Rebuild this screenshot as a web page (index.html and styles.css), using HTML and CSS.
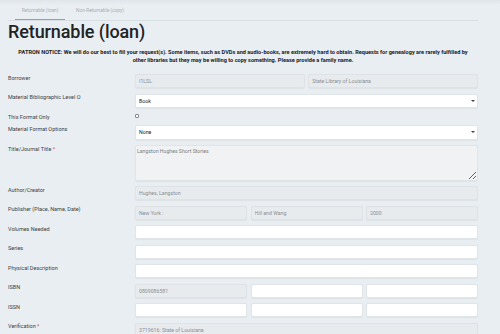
FILE: index.html
```html
<!DOCTYPE html>
<html lang="en">
<head>
  <meta charset="UTF-8" />
  <meta name="viewport" content="width=device-width, initial-scale=1.0" />
  <title>Returnable (loan)</title>
  <link rel="stylesheet" href="styles.css">
</head>
<body>
  <div class="tabs">
    <a class="tab active">Returnable (loan)</a>
    <a class="tab">Non-Returnable (copy)</a>
  </div>
  <h1>Returnable (loan)</h1>
  <p class="notice">PATRON NOTICE: We will do our best to fill your request(s). Some items, such as DVDs and audio-books, are extremely hard to obtain. Requests for genealogy are rarely fulfilled by other libraries but they may be willing to copy something. Please provide a family name.</p>

  <form class="form">
    <div class="row">
      <label>Borrower</label>
      <div class="fields two">
        <input class="ro" value="I1LSL" readonly>
        <input class="ro" value="State Library of Louisiana" readonly>
      </div>
    </div>
    <div class="row">
      <label>Material Bibliographic Level O</label>
      <div class="select-wrap">
        <select><option>Book</option></select>
      </div>
    </div>
    <div class="row check-row">
      <label>This Format Only</label>
      <div><input type="checkbox" class="check"></div>
    </div>
    <div class="row">
      <label>Material Format Options</label>
      <div class="select-wrap">
        <select><option>None</option></select>
      </div>
    </div>
    <div class="row">
      <label>Title/Journal Title <span class="req">*</span></label>
      <textarea class="ro" readonly>Langston Hughes Short Stories</textarea>
    </div>
    <div class="row">
      <label>Author/Creator</label>
      <input class="ro" value="Hughes, Langston" readonly>
    </div>
    <div class="row">
      <label>Publisher (Place, Name, Date)</label>
      <div class="fields three">
        <input class="ro" value="New York :" readonly>
        <input class="ro" value="Hill and Wang" readonly>
        <input class="ro" value="2000" readonly>
      </div>
    </div>
    <div class="row">
      <label>Volumes Needed</label>
      <input>
    </div>
    <div class="row">
      <label>Series</label>
      <input>
    </div>
    <div class="row">
      <label>Physical Description</label>
      <input>
    </div>
    <div class="row">
      <label>ISBN</label>
      <div class="fields three">
        <input class="ro" value="0809086581" readonly>
        <input>
        <input>
      </div>
    </div>
    <div class="row">
      <label>ISSN</label>
      <div class="fields three">
        <input>
        <input>
        <input>
      </div>
    </div>
    <div class="row">
      <label>Verification <span class="req">*</span></label>
      <input class="ro" value="3719616: State of Louisiana" readonly>
    </div>
  </form>
</body>
</html>
```

FILE: styles.css
```css
/* Base */
* { margin: 0; padding: 0; box-sizing: border-box; }
body { font-family: Roboto, "Liberation Sans", sans-serif; font-size: 5.5px; background: #e8eef1 linear-gradient(#dfe5e9, #e8eef1 5px) no-repeat; color: #333; padding: 0 22px 0 8px; overflow: hidden; }

/* Tabs */
.tabs { display: flex; height: 21px; border-bottom: 1px solid #d9e0e4; }
.tab { width: 50px; padding-top: 8px; text-align: center; font-size: 4.8px; color: #a9b0b5; margin-left: 7px; }
.tab.active { border-bottom: 1.5px solid #9aa1a6; }
.tab + .tab { width: 70px; margin-left: 0; }

/* Heading & notice */
h1 { font-size: 18px; font-weight: 500; color: #1f2326; line-height: 22px; letter-spacing: -0.1px; }
.notice { font-size: 5.6px; font-weight: 700; line-height: 8px; text-align: center; color: #222; margin: 5px 0 10px; padding: 0 6px; }

/* Form rows */
.row { display: grid; grid-template-columns: 127px 1fr; margin-bottom: 5.5px; }
.row label { font-size: 5.5px; line-height: 7px; color: #3d4246; padding-top: 0.5px; }
.req { color: #e0453a; }
.fields { display: grid; gap: 3.5px; }
.fields.two { grid-template-columns: 1fr 1fr; }
.fields.three { grid-template-columns: 1fr 1fr 1fr; }

input, select, textarea { display: block; font-family: inherit; font-size: 5.2px; color: #555; height: 14px; width: 100%; border: 1px solid #e0e5e8; border-radius: 2px; background: #fff; padding: 0 3px; outline: none; box-shadow: 0 0.5px 1px rgba(0,0,0,0.05); }
input.ro { background: #e7ebee; color: #8a8f93; border-color: #dfe3e6; }
textarea { height: 35.5px; padding: 2px 1px; resize: vertical; line-height: 7px; }
textarea.ro { background: #f1f2f4; color: #7a7f83; }

/* Select with small caret */
.select-wrap { position: relative; }
.select-wrap select { appearance: none; -webkit-appearance: none; height: 14.5px; color: #222; }
.select-wrap::after { content: ""; position: absolute; right: 3px; top: 6px; border-left: 2px solid transparent; border-right: 2px solid transparent; border-top: 2.5px solid #444; }

/* Checkbox */
.check-row { height: 6.2px; }
.check { appearance: none; -webkit-appearance: none; width: 4px; height: 4px; border: 0.6px solid #888; border-radius: 1px; background: #fff; margin-top: 0.5px; box-shadow: none; padding: 0; }
```
